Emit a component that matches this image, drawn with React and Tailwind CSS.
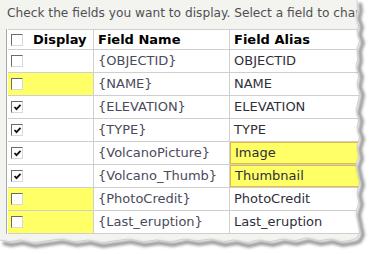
import React from "react";

const rows = [
  { checked: false, name: "{OBJECTID}", alias: "OBJECTID" },
  { checked: false, name: "{NAME}", alias: "NAME", hiDisplay: true },
  { checked: true, name: "{ELEVATION}", alias: "ELEVATION" },
  { checked: true, name: "{TYPE}", alias: "TYPE" },
  { checked: true, name: "{VolcanoPicture}", alias: "Image", hiAlias: true },
  { checked: true, name: "{Volcano_Thumb}", alias: "Thumbnail", hiAlias: true },
  { checked: false, name: "{PhotoCredit}", alias: "PhotoCredit", hiDisplay: true },
  { checked: false, name: "{Last_eruption}", alias: "Last_eruption", hiDisplay: true },
];

const CheckBox = ({ checked }) => (
  <div className="relative h-[12px] w-[12px] shrink-0 border border-t-[#6b6b6b] border-l-[#6b6b6b] border-r-[#d8d8d8] border-b-[#d8d8d8] bg-white">
    {checked && (
      <svg className="absolute left-[1px] top-[1px]" width="9" height="9" viewBox="0 0 9 9">
        <path d="M1.5 4 L3.5 6.2 L7.5 1.8" fill="none" stroke="#111" strokeWidth="1.8" />
      </svg>
    )}
  </div>
);

const TornEdge = () => {
  const right = [
    [357, 0], [358, 8], [356, 16], [359, 24], [357, 32], [360, 40], [357, 48], [358, 58],
    [356, 66], [359, 74], [357, 84], [360, 92], [358, 102], [356, 110], [359, 118],
    [357, 128], [360, 136], [357, 146], [359, 156], [356, 164], [358, 174], [360, 182],
    [357, 192], [359, 202], [356, 212], [358, 222], [360, 232], [357, 238],
  ];
  const bottom = [
    [352, 240], [340, 242], [330, 239], [318, 241], [306, 238], [294, 241], [282, 239],
    [270, 242], [258, 240], [246, 243], [234, 240], [222, 242], [210, 239], [196, 241],
    [184, 239], [170, 242], [156, 240], [142, 242], [128, 239], [114, 241], [100, 243],
    [88, 240], [74, 242], [60, 239], [46, 241], [32, 243], [20, 240], [8, 242], [0, 240],
  ];
  const pts = [...right, ...bottom];
  const d = "M" + pts.map((p) => p.join(" ")).join(" L");
  const outside = d + " L0 254 L379 254 L379 0 Z";
  return (
    <svg className="absolute left-0 top-0" width="379" height="254" viewBox="0 0 379 254">
      <defs>
        <filter id="blur" x="-10%" y="-10%" width="120%" height="120%">
          <feGaussianBlur stdDeviation="1.8" />
        </filter>
      </defs>
      <path d={outside} fill="#ffffff" />
      <path
        d={d}
        transform="translate(3 3)"
        fill="none"
        stroke="#7a7a7a"
        strokeWidth="3.5"
        filter="url(#blur)"
        opacity="0.85"
      />
      <path d={d} fill="none" stroke="#cfcfcf" strokeWidth="1" />
    </svg>
  );
};

export default function App() {
  return (
    <div
      className="relative h-[254px] w-[379px] overflow-hidden bg-white"
      style={{ fontFamily: '"DejaVu Sans", Verdana, sans-serif' }}
    >
      <div className="h-[246px] w-[364px] bg-[#f3f3f0]">
        <div className="h-[29px] overflow-hidden pl-[7px] pt-[6px] text-[12.2px] leading-[15px] whitespace-nowrap text-[#505050]">
          Check the fields you want to display. Select a field to change
        </div>
        <div className="ml-[6px] border-l border-[#a8a8a8] bg-white pl-[1px]">
          <div className="flex h-[21px] border-t border-b border-[#cfcfcf] text-[13px] font-bold text-black">
            <div className="flex w-[86px] items-center gap-[10px] border-r border-[#cfcfcf] pl-[3px]">
              <CheckBox />
              <span>Display</span>
            </div>
            <div className="flex w-[136px] items-center border-r border-[#cfcfcf] pl-[4px]">Field Name</div>
            <div className="flex flex-1 items-center pl-[4px]">Field Alias</div>
          </div>
          {rows.map((r) => (
            <div key={r.name} className="flex h-[23px] border-b border-[#cfcfcf] text-[13px]">
              <div
                className={`flex w-[86px] items-center border-r border-[#cfcfcf] pl-[3px] ${
                  r.hiDisplay ? "bg-[#ffff66]" : "bg-white"
                }`}
              >
                <CheckBox checked={r.checked} />
              </div>
              <div className="flex w-[136px] items-center border-r border-[#cfcfcf] pl-[4px] text-[#4a4a5c]">
                {r.name}
              </div>
              <div
                className={`flex flex-1 items-center pl-[4px] text-[#2f2f3a] ${
                  r.hiAlias ? "border border-[#e6b84a] bg-[#ffff66]" : ""
                }`}
              >
                {r.alias}
              </div>
            </div>
          ))}
        </div>
      </div>
      <TornEdge />
    </div>
  );
}
